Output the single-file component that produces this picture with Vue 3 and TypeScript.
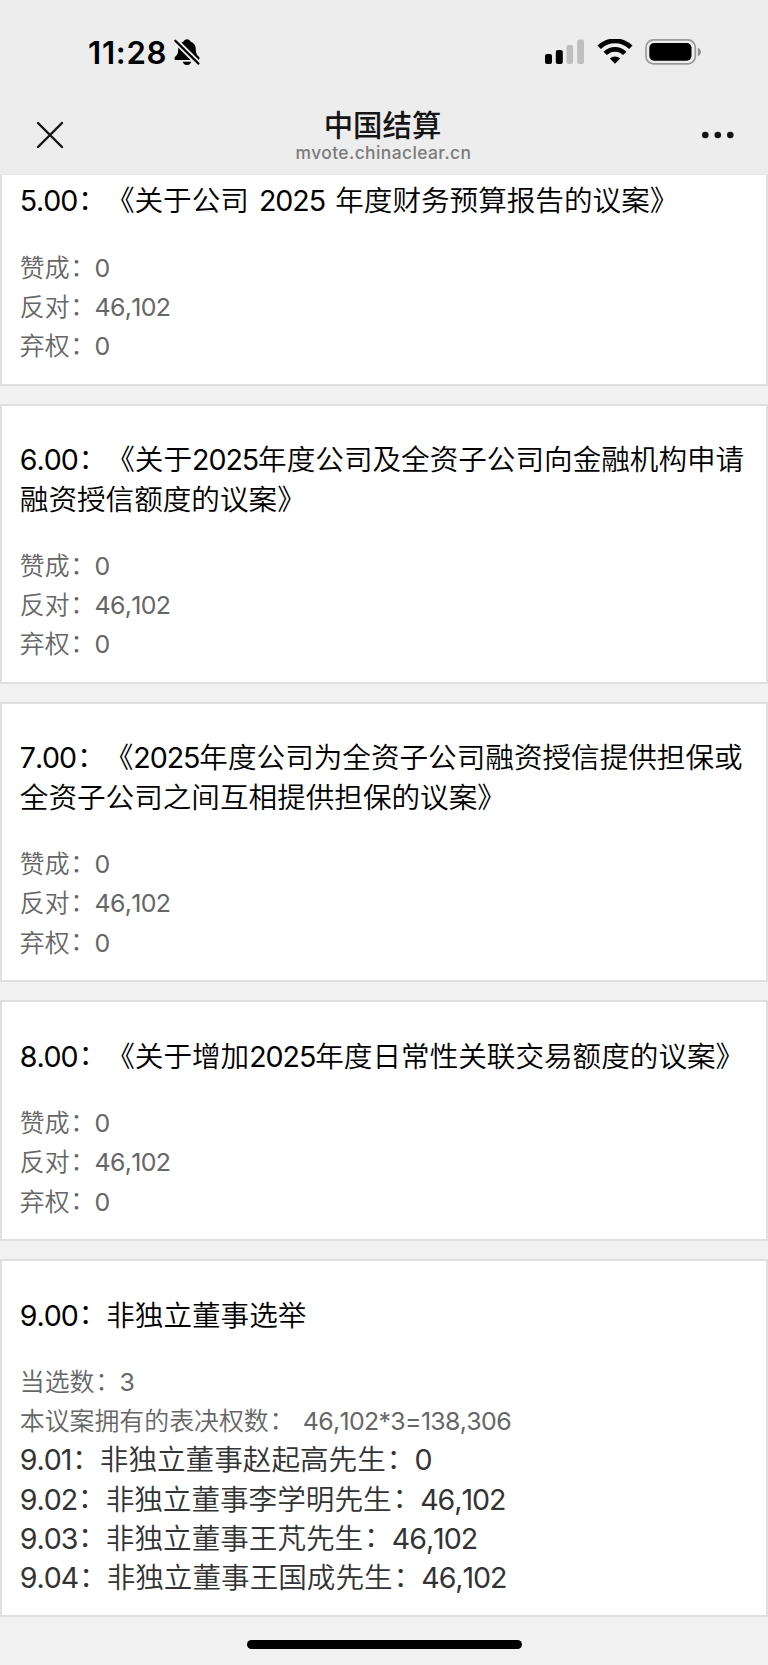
<script setup lang="ts">
interface Run {
  text: string
  kind: 'latin' | 'colon' | 'han'
}

interface Proposal {
  title: string[]
  details: string[]
  candidates?: string[]
}

const votes: string[] = ['赞成：0', '反对：46,102', '弃权：0']

const proposals: Proposal[] = [
  { title: ['5.00：《关于公司 2025 年度财务预算报告的议案》'], details: votes },
  { title: ['6.00：《关于2025年度公司及全资子公司向金融机构申请', '融资授信额度的议案》'], details: votes },
  { title: ['7.00：《2025年度公司为全资子公司融资授信提供担保或', '全资子公司之间互相提供担保的议案》'], details: votes },
  { title: ['8.00：《关于增加2025年度日常性关联交易额度的议案》'], details: votes },
  {
    title: ['9.00：非独立董事选举'],
    details: ['当选数：3', '本议案拥有的表决权数： 46,102*3=138,306'],
    candidates: [
      '9.01：非独立董事赵起高先生：0',
      '9.02：非独立董事李学明先生：46,102',
      '9.03：非独立董事王芃先生：46,102',
      '9.04：非独立董事王国成先生：46,102',
    ],
  },
]

// Latin runs carry tighter tracking than the Chinese text around them,
// and full-width colons sit slightly higher.
function runs(line: string): Run[] {
  return (line.match(/[\x20-\x7e]+|：|[^\x20-\x7e：]+/g) ?? []).map((text) => ({
    text,
    kind: text === '：' ? 'colon' : /^[\x20-\x7e]/.test(text) ? 'latin' : 'han',
  }))
}
</script>

<template>
  <div class="screen">
    <header class="top">
      <div class="status">
        <span class="time">11:28</span>
        <svg class="bell" width="28" height="28" viewBox="0 0 28 28">
          <path d="M14 1.2c1.7 0 3 1 3.400 2.400 3.600 1.200 5.300 4 5.400 7.600.1 4 .8 5.600 2.800 7.300.8.8.9 1.200.9 1.900 0 .9-.6 1.500-1.600 1.500H3.100c-1 0-1.600-.6-1.600-1.500 0-.8.2-1.200.9-1.900 2-1.800 2.700-3.300 2.800-7.300.1-3.700 1.800-6.400 5.400-7.600C11 2.200 12.300 1.200 14 1.200z" />
          <path d="M9.800 23.800h8.400c-.3 2-2 3.300-4.200 3.300s-3.900-1.300-4.200-3.300z" />
          <path class="gap" d="M2.300 2.500 25.600 25.800" />
          <path class="slash" d="M2.300 2.700 25.500 25.600" />
        </svg>
        <svg class="signal" width="40" height="26" viewBox="0 0 40 26">
          <rect x="0" y="15" width="7" height="10" rx="2" />
          <rect x="10.800" y="11" width="7" height="14" rx="2" />
          <rect class="off" x="21.500" y="6" width="6.600" height="19" rx="2" />
          <rect class="off" x="32.200" y=".5" width="6.800" height="24.500" rx="2" />
        </svg>
        <svg class="wifi" width="36" height="26" viewBox="0 0 36 26">
          <path class="arc" d="M2.200 8.300a22.500 22.500 0 0 1 31.600 0" />
          <path class="arc" d="M8.200 14.400a13.900 13.900 0 0 1 19.600 0" />
          <path d="M12.800 19.500a7.500 7.500 0 0 1 10.400 0L18 24.800z" />
        </svg>
        <svg class="battery" width="58" height="26" viewBox="0 0 58 26">
          <rect class="shell" x="1" y=".9" width="49.300" height="24" rx="7.500" />
          <rect x="4.300" y="4" width="42.200" height="17.700" rx="4.700" />
          <path class="cap" d="M52.800 8.700c2 .8 3.100 2.300 3.100 4.300s-1.100 3.500-3.100 4.300z" />
        </svg>
      </div>
      <div class="nav">
        <svg class="close" width="28" height="28" viewBox="0 0 28 28">
          <path d="M2 2 26 26M26 2 2 26" />
        </svg>
        <div class="heading">
          <h1>中国结算</h1>
          <p>mvote.chinaclear.cn</p>
        </div>
        <svg class="more" width="34" height="8" viewBox="0 0 34 8">
          <circle cx="4.300" cy="4" r="3.300" />
          <circle cx="16.800" cy="4" r="3.300" />
          <circle cx="29.300" cy="4" r="3.300" />
        </svg>
      </div>
    </header>

    <main class="list">
      <section v-for="(item, i) in proposals" :key="i" class="card">
        <h2 class="title">
          <span v-for="line in item.title" :key="line" class="line">
            <span v-for="(run, r) in runs(line)" :key="r" :class="run.kind">{{ run.text }}</span>
          </span>
        </h2>
        <div class="details">
          <p v-for="line in item.details" :key="line" class="line">
            <span v-for="(run, r) in runs(line)" :key="r" :class="run.kind">{{ run.text }}</span>
          </p>
        </div>
        <div v-if="item.candidates" class="candidates">
          <p v-for="line in item.candidates" :key="line" class="line">
            <span v-for="(run, r) in runs(line)" :key="r" :class="run.kind">{{ run.text }}</span>
          </p>
        </div>
      </section>
    </main>

    <footer class="bottom">
      <div class="indicator"></div>
    </footer>
  </div>
</template>

<style>
body {
  margin: 0;
  background: #f1f1f1;
}
</style>

<style scoped>
.screen {
  width: 768px;
  height: 1665px;
  overflow: hidden;
  display: flex;
  flex-direction: column;
  background: #f1f1f1;
  font-family: Inter, "Noto Sans CJK SC", sans-serif;
  text-spacing-trim: space-all;
  text-autospace: no-autospace;
}

h1,
h2,
p {
  margin: 0;
  font-weight: 400;
}

.top {
  flex: none;
  box-sizing: border-box;
  height: 175px;
  background: #ededed;
  border-bottom: 1px solid #e6e6e6;
}

.status {
  height: 67px;
  padding: 38px 0 0 88px;
  box-sizing: border-box;
  display: flex;
  align-items: flex-start;
}

.time {
  width: 85px;
  font-size: 31.2px;
  line-height: 31px;
  font-weight: 600;
  letter-spacing: 0.7px;
  font-kerning: none;
  white-space: nowrap;
}

.gap {
  stroke: #ededed;
  stroke-width: 6;
}

.slash {
  stroke: #000;
  stroke-width: 2.2;
  stroke-linecap: round;
}

.signal {
  margin: 1px 0 0 344px;
}

.off {
  fill: #bfbfbf;
}

.wifi {
  margin: 1px 0 0 12px;
}

.arc {
  fill: none;
  stroke: #000;
  stroke-width: 4.8;
}

.battery {
  margin: 1px 0 0 12px;
}

.shell {
  fill: none;
  stroke: #9a9a9a;
  stroke-width: 1.7;
}

.cap {
  fill: #8f8f8f;
}

.nav {
  height: 107px;
  padding: 0 33px 0 36px;
  display: grid;
  grid-template-columns: 100px 1fr 104px;
  align-items: start;
}

.close {
  margin-top: 54px;
  fill: none;
  stroke: #151515;
  stroke-width: 2.4;
  stroke-linecap: round;
}

.heading {
  padding-top: 41px;
  text-align: center;
}

h1 {
  margin-right: 2px;
  font-size: 29.4px;
  line-height: 36px;
  font-weight: 500;
  color: #151515;
}

.heading p {
  font-size: 17.4px;
  line-height: 18px;
  font-weight: 500;
  letter-spacing: 0.42px;
  color: #7b7b7b;
}

.more {
  margin-top: 64px;
  justify-self: end;
  fill: #151515;
}

.list {
  display: flex;
  flex-direction: column;
  gap: 18.4px;
}

.card {
  box-sizing: border-box;
  border: 2px solid #dfdfdf;
  padding: 34.2px 0 17.2px 17.8px;
  background: #fff;
}

.card:first-child {
  border-top: 0;
  padding-top: 6.3px;
}

.line {
  display: block;
  height: 39.25px;
  line-height: 39.25px;
  white-space: pre;
}

.title {
  margin-bottom: 28.2px;
  font-size: 28.6px;
  font-weight: 350;
  color: #000;
}

.details {
  font-size: 24.9px;
  color: #666;
}

.candidates {
  margin-top: -1.2px;
  font-size: 28.6px;
  color: #333;
}

.details p,
.candidates p {
  font-weight: 350;
}

.latin {
  font-weight: 380;
  font-kerning: none;
  letter-spacing: -0.037em;
  word-spacing: 0.11em;
}

.details .latin {
  letter-spacing: -0.026em;
}

.colon {
  margin: 0 -0.03em 0 0.03em;
  line-height: 1;
  vertical-align: 0.05em;
}

.bottom {
  flex: 1;
  padding-top: 23px;
}

.indicator {
  width: 275px;
  height: 9px;
  margin: 0 auto;
  border-radius: 5px;
  background: #000;
}
</style>
